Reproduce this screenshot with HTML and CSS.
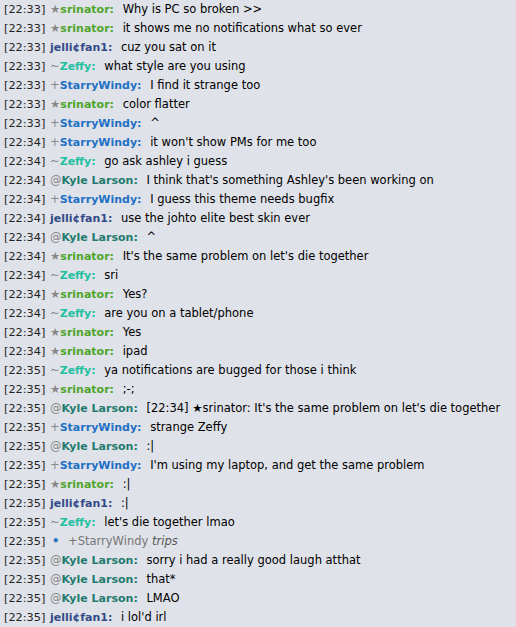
FILE: index.html
```html
<!DOCTYPE html>
<html>
<head>
<meta charset="utf-8">
<title>Lobby</title>
<link rel="stylesheet" href="styles.css">
</head>
<body>
<div class="chat">
  <div class="line"><span class="time">[22:33]</span> <strong class="name sri"><span class="rank">★</span>srinator:</strong> <span class="msg">Why is PC so broken &gt;&gt;</span></div>
  <div class="line"><span class="time">[22:33]</span> <strong class="name sri"><span class="rank">★</span>srinator:</strong> <span class="msg">it shows me no notifications what so ever</span></div>
  <div class="line"><span class="time">[22:33]</span> <strong class="name jel">jelli¢fan1:</strong> <span class="msg">cuz you sat on it</span></div>
  <div class="line"><span class="time">[22:33]</span> <strong class="name zef"><span class="rank">~</span>Zeffy:</strong> <span class="msg">what style are you using</span></div>
  <div class="line"><span class="time">[22:33]</span> <strong class="name sta"><span class="rank">+</span>StarryWindy:</strong> <span class="msg">I find it strange too</span></div>
  <div class="line"><span class="time">[22:33]</span> <strong class="name sri"><span class="rank">★</span>srinator:</strong> <span class="msg">color flatter</span></div>
  <div class="line"><span class="time">[22:33]</span> <strong class="name sta"><span class="rank">+</span>StarryWindy:</strong> <span class="msg">^</span></div>
  <div class="line"><span class="time">[22:34]</span> <strong class="name sta"><span class="rank">+</span>StarryWindy:</strong> <span class="msg">it won't show PMs for me too</span></div>
  <div class="line"><span class="time">[22:34]</span> <strong class="name zef"><span class="rank">~</span>Zeffy:</strong> <span class="msg">go ask ashley i guess</span></div>
  <div class="line"><span class="time">[22:34]</span> <strong class="name kyl"><span class="rank">@</span>Kyle Larson:</strong> <span class="msg">I think that's something Ashley's been working on</span></div>
  <div class="line"><span class="time">[22:34]</span> <strong class="name sta"><span class="rank">+</span>StarryWindy:</strong> <span class="msg">I guess this theme needs bugfix</span></div>
  <div class="line"><span class="time">[22:34]</span> <strong class="name jel">jelli¢fan1:</strong> <span class="msg">use the johto elite best skin ever</span></div>
  <div class="line"><span class="time">[22:34]</span> <strong class="name kyl"><span class="rank">@</span>Kyle Larson:</strong> <span class="msg">^</span></div>
  <div class="line"><span class="time">[22:34]</span> <strong class="name sri"><span class="rank">★</span>srinator:</strong> <span class="msg">It's the same problem on let's die together</span></div>
  <div class="line"><span class="time">[22:34]</span> <strong class="name zef"><span class="rank">~</span>Zeffy:</strong> <span class="msg">sri</span></div>
  <div class="line"><span class="time">[22:34]</span> <strong class="name sri"><span class="rank">★</span>srinator:</strong> <span class="msg">Yes?</span></div>
  <div class="line"><span class="time">[22:34]</span> <strong class="name zef"><span class="rank">~</span>Zeffy:</strong> <span class="msg">are you on a tablet/phone</span></div>
  <div class="line"><span class="time">[22:34]</span> <strong class="name sri"><span class="rank">★</span>srinator:</strong> <span class="msg">Yes</span></div>
  <div class="line"><span class="time">[22:34]</span> <strong class="name sri"><span class="rank">★</span>srinator:</strong> <span class="msg">ipad</span></div>
  <div class="line"><span class="time">[22:35]</span> <strong class="name zef"><span class="rank">~</span>Zeffy:</strong> <span class="msg">ya notifications are bugged for those i think</span></div>
  <div class="line"><span class="time">[22:35]</span> <strong class="name sri"><span class="rank">★</span>srinator:</strong> <span class="msg">;-;</span></div>
  <div class="line"><span class="time">[22:35]</span> <strong class="name kyl"><span class="rank">@</span>Kyle Larson:</strong> <span class="msg">[22:34] ★srinator: It's the same problem on let's die together</span></div>
  <div class="line"><span class="time">[22:35]</span> <strong class="name sta"><span class="rank">+</span>StarryWindy:</strong> <span class="msg">strange Zeffy</span></div>
  <div class="line"><span class="time">[22:35]</span> <strong class="name kyl"><span class="rank">@</span>Kyle Larson:</strong> <span class="msg">:|</span></div>
  <div class="line"><span class="time">[22:35]</span> <strong class="name sta"><span class="rank">+</span>StarryWindy:</strong> <span class="msg">I'm using my laptop, and get the same problem</span></div>
  <div class="line"><span class="time">[22:35]</span> <strong class="name sri"><span class="rank">★</span>srinator:</strong> <span class="msg">:|</span></div>
  <div class="line"><span class="time">[22:35]</span> <strong class="name jel">jelli¢fan1:</strong> <span class="msg">:|</span></div>
  <div class="line"><span class="time">[22:35]</span> <strong class="name zef"><span class="rank">~</span>Zeffy:</strong> <span class="msg">let's die together lmao</span></div>
  <div class="line"><span class="time">[22:35]</span> <strong class="dot">•</strong> <span class="emote">+StarryWindy <i>trips</i></span></div>
  <div class="line"><span class="time">[22:35]</span> <strong class="name kyl"><span class="rank">@</span>Kyle Larson:</strong> <span class="msg">sorry i had a really good laugh atthat</span></div>
  <div class="line"><span class="time">[22:35]</span> <strong class="name kyl"><span class="rank">@</span>Kyle Larson:</strong> <span class="msg">that*</span></div>
  <div class="line"><span class="time">[22:35]</span> <strong class="name kyl"><span class="rank">@</span>Kyle Larson:</strong> <span class="msg">LMAO</span></div>
  <div class="line"><span class="time">[22:35]</span> <strong class="name jel">jelli¢fan1:</strong> <span class="msg">i lol'd irl</span></div>
</div>
</body>
</html>
```

FILE: styles.css
```css
html, body {
	margin: 0;
	padding: 0;
	background-color: #dfe2e8;
}
.chat {
	font-family: "DejaVu Sans", Verdana, sans-serif;
	font-size: 11.5px;
	color: #000;
	padding: 0 4px;
}
.line {
	line-height: 19px;
	white-space: nowrap;
	overflow: hidden;
}
.time {
	color: #222;
	font-size: 11.3px;
	margin-right: 1px;
}
.name {
	font-size: 11px;
	margin-right: 5px;
}
.rank {
	color: #888;
	font-weight: normal;
	font-size: 11.5px;
}
.sri { color: #4ea52c; }
.jel { color: #334a88; }
.zef { color: #22bfa0; }
.sta { color: #2270c4; }
.kyl { color: #237a6e; }
.dot {
	color: #2a73c4;
	margin: 0 5px 0 2px;
}
.emote {
	color: #777;
}
.emote i {
	color: #555;
}
```
